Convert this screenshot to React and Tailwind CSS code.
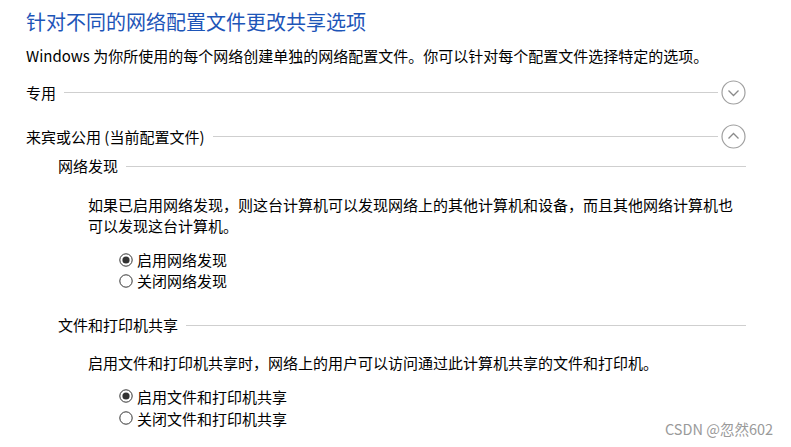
import React from 'react';

const FONT = { fontFamily: '"Microsoft YaHei UI", "Noto Sans CJK SC", "Noto Sans", sans-serif' };

// expand/collapse button on the profile rows
const ToggleCircle = ({ up }) => (
  <svg width="25" height="25" viewBox="0 0 25 25" className="shrink-0">
    <circle cx="12.5" cy="12.5" r="11.5" fill="none" stroke="#a0a0a0" strokeWidth="1.2" />
    {up ? (
      <path d="M7.5 14.5 L12.5 9.5 L17.5 14.5" fill="none" stroke="#8a8a8a" strokeWidth="1.3" />
    ) : (
      <path d="M7.5 10.5 L12.5 15.5 L17.5 10.5" fill="none" stroke="#8a8a8a" strokeWidth="1.3" />
    )}
  </svg>
);

const Radio = ({ checked, label, tight }) => (
  <div className={`flex items-center ${tight ? 'h-[21px]' : 'h-[22px]'}`}>
    <svg width="14" height="14" viewBox="0 0 14 14" className="shrink-0">
      <circle cx="7" cy="7" r="6.2" fill="#fff" stroke="#333" strokeWidth="1" />
      {checked && <circle cx="7" cy="7" r="3.6" fill="#333" />}
    </svg>
    <span className="ml-[4px] text-[15px] leading-[21px] text-black">{label}</span>
  </div>
);

const SectionHeader = ({ title, children, className = '' }) => (
  <div className={`flex items-center ${className}`}>
    <span className="text-[15px] leading-[24px] text-black whitespace-nowrap">{title}</span>
    <div className="flex-1 ml-[8px] border-t border-[#cfcfcf]" />
    {children}
  </div>
);

export default function App() {
  return (
    <div className="relative w-[791px] h-[447px] bg-white overflow-hidden" style={FONT}>
      <div className="pl-[26px] pr-[45px] pt-[8px]">
        <h1 className="text-[20px] leading-[28px] text-[#1d55b8] font-normal">针对不同的网络配置文件更改共享选项</h1>
        <p className="mt-[9px] text-[15px] leading-[22px] text-black">
          Windows 为你所使用的每个网络创建单独的网络配置文件。你可以针对每个配置文件选择特定的选项。
        </p>

        <SectionHeader title="专用" className="mt-[13px]">
          <div className="ml-[3px]"><ToggleCircle /></div>
        </SectionHeader>

        <SectionHeader title="来宾或公用 (当前配置文件)" className="mt-[19px]">
          <div className="ml-[3px]"><ToggleCircle up /></div>
        </SectionHeader>

        <div className="ml-[32px]">
          <SectionHeader title="网络发现" className="mt-[6px] h-[22px]" />
          <p className="mt-[17px] pl-[30px] text-[15px] leading-[21px] text-black">
            如果已启用网络发现，则这台计算机可以发现网络上的其他计算机和设备，而且其他网络计算机也可以发现这台计算机。
          </p>
          <div className="mt-[13px] ml-[61px]">
            <Radio checked tight label="启用网络发现" />
            <Radio tight label="关闭网络发现" />
          </div>

          <SectionHeader title="文件和打印机共享" className="mt-[23px] h-[22px]" />
          <p className="mt-[16px] pl-[30px] text-[15px] leading-[21px] text-black">
            启用文件和打印机共享时，网络上的用户可以访问通过此计算机共享的文件和打印机。
          </p>
          <div className="mt-[12px] ml-[61px]">
            <Radio checked label="启用文件和打印机共享" />
            <Radio label="关闭文件和打印机共享" />
          </div>
        </div>
      </div>

      <div className="absolute left-[665px] top-[419px] text-[14.5px] leading-[20px] text-[#9a9a9a] whitespace-nowrap">
        CSDN @忽然602
      </div>
    </div>
  );
}
